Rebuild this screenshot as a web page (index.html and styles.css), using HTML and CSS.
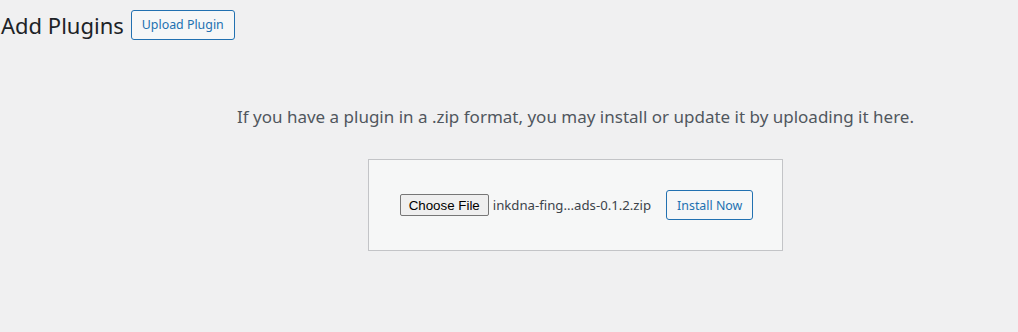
FILE: index.html
```html
<!DOCTYPE html>
<html lang="en">
<head>
    <meta charset="UTF-8">
    <meta name="viewport" content="width=device-width, initial-scale=1.0">
    <title>Add Plugins</title>
    <link rel="stylesheet" href="styles.css">
</head>
<body>
    <div class="wrap">
        <div class="page-header">
            <h1 class="page-title">Add Plugins</h1>
            <a href="#" class="page-title-action">Upload Plugin</a>
        </div>

        <div class="upload-plugin">
            <p class="install-help">If you have a plugin in a .zip format, you may install or update it by uploading it here.</p>
            <form class="wp-upload-form">
                <div class="file-field">
                    <button type="button" class="file-btn">Choose File</button>
                    <span class="file-name">inkdna-fing...ads-0.1.2.zip</span>
                </div>
                <button type="button" class="button">Install Now</button>
            </form>
        </div>
    </div>
</body>
</html>
```

FILE: styles.css
```css
body {
    margin: 0;
    background-color: #f0f0f1;
    color: #3c434a;
    font-family: "Noto Sans", "Open Sans", sans-serif;
    font-size: 13px;
}

.page-header {
    display: flex;
    align-items: center;
    gap: 7px;
    padding: 10px 0 0 1px;
}

.page-title {
    margin: 0;
    font-size: 22px;
    font-weight: 400;
    line-height: 30px;
    color: #1d2327;
}

.page-title-action {
    display: inline-block;
    height: 28px;
    line-height: 28px;
    padding: 0 10px;
    border: 1px solid #2271b1;
    border-radius: 3px;
    background-color: #f6f7f7;
    color: #2271b1;
    text-decoration: none;
    font-size: 12.4px;
}

.upload-plugin {
    padding-left: 133px;
    text-align: center;
}

.install-help {
    margin: 0;
    padding: 66px 0 0;
    font-size: 17px;
    line-height: 1.3;
    color: #50575e;
}

.wp-upload-form {
    display: inline-flex;
    align-items: center;
    margin-top: 31px;
    padding: 30px 29px 30px 31px;
    background-color: #f6f7f7;
    border: 1px solid #c3c4c7;
}

.file-field {
    display: flex;
    align-items: center;
    gap: 4px;
    margin-right: 15px;
}

.file-btn {
    height: 22px;
    padding: 1px 8px;
    font-family: "Liberation Sans", Arial, sans-serif;
    font-size: 13.33px;
    color: #000;
    background-color: #efefef;
    border: 1px solid #767676;
    border-radius: 2px;
}

.file-name {
    color: #3c434a;
    font-size: 13.2px;
}

.button {
    height: 30px;
    padding: 0 10px;
    font-family: inherit;
    font-size: 12.4px;
    color: #2271b1;
    background-color: #f6f7f7;
    border: 1px solid #2271b1;
    border-radius: 3px;
}
```
